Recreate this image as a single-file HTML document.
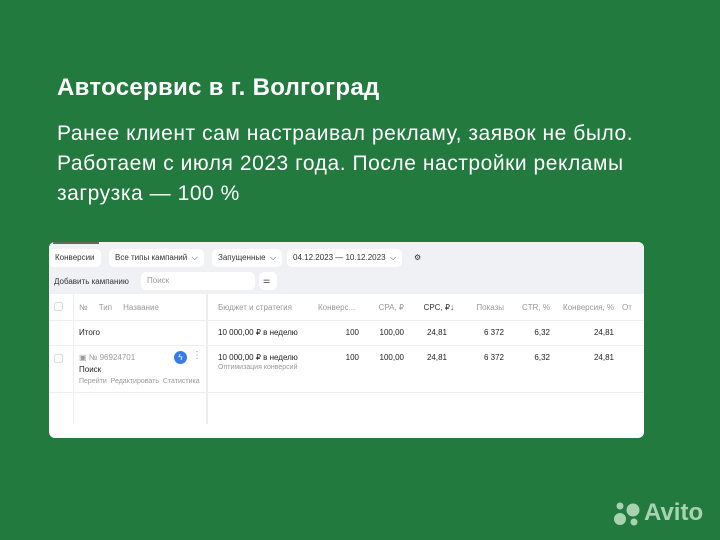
<!DOCTYPE html>
<html><head><meta charset="utf-8"><style>
*{margin:0;padding:0;box-sizing:border-box}
body{width:720px;height:540px;background:#227a3f;font-family:"Liberation Sans",sans-serif;position:relative;overflow:hidden;color:#fff}
.a{position:absolute;white-space:nowrap}
h1{position:absolute;left:57px;top:74px;font-size:24px;font-weight:bold;letter-spacing:0.3px}
.p{position:absolute;left:57px;top:119px;font-size:21px;line-height:30px;letter-spacing:0.55px}
.card{position:absolute;left:49px;top:242px;width:595px;height:196px;background:#fff;border-radius:6px;overflow:hidden;color:#222;font-size:8px}
.top{position:absolute;left:0;top:0;width:595px;height:52px;background:#eff1f5}
.btn{position:absolute;background:#fff;border-radius:5px;height:18px;line-height:18px;padding:0 6px;font-size:8px;color:#333}
.g{color:#999}
.line{position:absolute;left:0;width:595px;height:1px;background:#eceef2}
.vl{position:absolute;top:52px;width:1px;height:130px;background:#eceef2}
.r{text-align:right}
</style></head><body>
<h1>Автосервис в г. Волгоград</h1>
<div class="p">Ранее клиент сам настраивал рекламу, заявок не было.<br>Работаем с июля 2023 года. После настройки рекламы<br>загрузка — 100 %</div>
<div class="card">
<div class="top"></div>
<div class="a" style="left:4px;top:0;width:46px;height:2px;background:#666"></div>
<div class="btn" style="left:0;top:7px">Конверсии</div>
<div class="btn" style="left:60px;top:7px">Все типы кампаний &nbsp;⌵</div>
<div class="btn" style="left:163px;top:7px">Запущенные &nbsp;⌵</div>
<div class="btn" style="left:238px;top:7px">04.12.2023 — 10.12.2023 &nbsp;⌵</div>
<div class="btn" style="left:359px;top:7px;background:none">⚙</div>
<div class="a" style="left:5px;top:35px;font-size:8px;color:#333">Добавить кампанию</div>
<div class="btn g" style="left:92px;top:30px;width:114px">Поиск</div>
<div class="btn" style="left:210px;top:30px;width:18px;padding:0 4px">⚌</div>
<div class="line" style="top:78px"></div>
<div class="line" style="top:103px"></div>
<div class="line" style="top:150px"></div>
<div class="vl" style="left:24px"></div>
<div class="vl" style="left:157px;width:2px"></div>
<div class="a" style="left:5px;top:60px;width:9px;height:9px;border:1px solid #ddd;border-radius:2px"></div>
<div class="a" style="left:5px;top:112px;width:9px;height:9px;border:1px solid #ddd;border-radius:2px"></div>
<div class="a g" style="left:30px;top:61px">№ &nbsp;&nbsp;&nbsp;&nbsp;Тип &nbsp;&nbsp;&nbsp;&nbsp;Название</div>
<div class="a g" style="left:169px;top:61px">Бюджет и стратегия</div>
<div class="a g" style="left:269px;top:61px">Конверс...</div>
<div class="a g r" style="left:310px;width:45px;top:61px">CPA, ₽</div>
<div class="a r" style="left:360px;width:45px;top:61px;color:#333">CPC, ₽↓</div>
<div class="a g r" style="left:410px;width:45px;top:61px">Показы</div>
<div class="a g r" style="left:455px;width:46px;top:61px">CTR, %</div>
<div class="a g r" style="left:505px;width:60px;top:61px">Конверсия, %</div>
<div class="a g" style="left:573px;top:61px">От</div>
<div class="a" style="left:30px;top:86px">Итого</div>
<div class="a" style="left:169px;top:86px">10 000,00 ₽ в неделю</div>
<div class="a g" style="left:30px;top:111px">▣ № 96924701</div>
<div class="a" style="left:125px;top:109px;width:13px;height:13px;border-radius:50%;background:#3b7be8;color:#fff;font-size:8px;text-align:center;line-height:13px">ϟ</div>
<div class="a g" style="left:143px;top:108px;font-size:10px">⋮</div>
<div class="a" style="left:30px;top:123px">Поиск</div>
<div class="a g" style="left:30px;top:136px;font-size:7px">Перейти &nbsp;Редактировать &nbsp;Статистика</div>
<div class="a" style="left:169px;top:111px">10 000,00 ₽ в неделю</div>
<div class="a g" style="left:169px;top:122px;font-size:7px">Оптимизация конверсий</div>
<div class="a r" style="left:260px;width:50px;top:86px">100</div>
<div class="a r" style="left:310px;width:45px;top:86px">100,00</div>
<div class="a r" style="left:355px;width:43px;top:86px">24,81</div>
<div class="a r" style="left:410px;width:45px;top:86px">6 372</div>
<div class="a r" style="left:455px;width:46px;top:86px">6,32</div>
<div class="a r" style="left:505px;width:60px;top:86px">24,81</div>
<div class="a r" style="left:260px;width:50px;top:111px">100</div>
<div class="a r" style="left:310px;width:45px;top:111px">100,00</div>
<div class="a r" style="left:355px;width:43px;top:111px">24,81</div>
<div class="a r" style="left:410px;width:45px;top:111px">6 372</div>
<div class="a r" style="left:455px;width:46px;top:111px">6,32</div>
<div class="a r" style="left:505px;width:60px;top:111px">24,81</div>
</div>
<svg class="a" style="left:612px;top:500px" width="34" height="28">
<g fill="#a9d3b0"><circle cx="21" cy="10" r="6.5"/><circle cx="8" cy="19" r="6"/><circle cx="22" cy="22" r="3.5"/><circle cx="8" cy="6" r="3.5"/></g></svg>
<div class="a" style="left:644px;top:499px;font-size:24px;font-weight:bold;color:#a9d3b0">Avito</div>
</body></html>
